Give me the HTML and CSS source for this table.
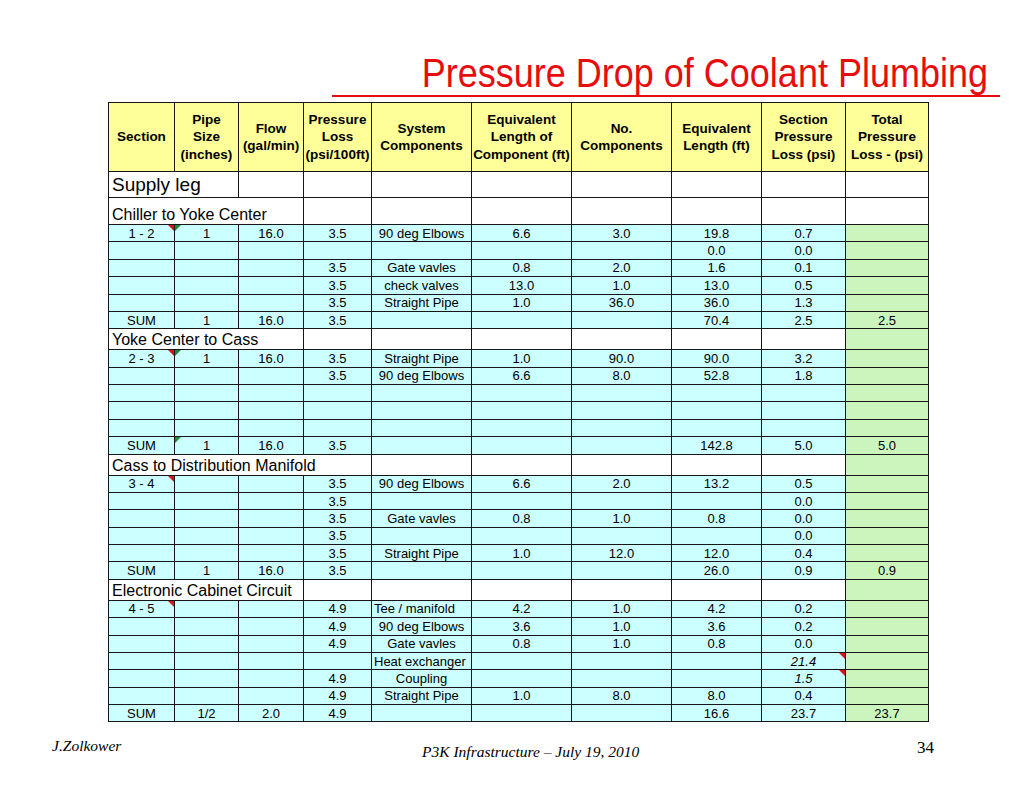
FILE: index.html
```html
<!DOCTYPE html>
<html lang="en">
<head>
<meta charset="utf-8">
<title>Pressure Drop of Coolant Plumbing</title>
<link rel="stylesheet" href="styles.css">
</head>
<body>
<div class="slide">
  <header class="title-block">
    <h1 class="title">Pressure Drop of Coolant Plumbing</h1>
    <div class="rule"></div>
  </header>

  <table class="grid">
    <colgroup>
      <col class="c1"><col class="c2"><col class="c3"><col class="c4"><col class="c5">
      <col class="c6"><col class="c7"><col class="c8"><col class="c9"><col class="c10">
    </colgroup>
    <thead>
      <tr class="head">
        <th>Section</th>
        <th>Pipe<br>Size<br>(inches)</th>
        <th>Flow<br>(gal/min)</th>
        <th>Pressure<br>Loss<br>(psi/100ft)</th>
        <th>System<br>Components</th>
        <th>Equivalent<br>Length of<br>Component (ft)</th>
        <th>No.<br>Components</th>
        <th>Equivalent<br>Length (ft)</th>
        <th>Section<br>Pressure<br>Loss (psi)</th>
        <th>Total<br>Pressure<br>Loss - (psi)</th>
      </tr>
    </thead>
    <tbody>
      <tr class="leg">
        <td colspan="2" class="label big">Supply leg</td>
        <td></td><td></td><td></td><td></td><td></td><td></td><td></td><td></td>
      </tr>
      <tr class="sub tall">
        <td colspan="3" class="label">Chiller to Yoke Center</td>
        <td></td><td></td><td></td><td></td><td></td><td></td><td></td>
      </tr>
      <tr class="row"><td class="cm">1 - 2</td><td class="er">1</td><td>16.0</td><td>3.5</td><td>90 deg Elbows</td><td>6.6</td><td>3.0</td><td>19.8</td><td>0.7</td><td class="tot"></td></tr>
      <tr class="row"><td></td><td></td><td></td><td></td><td></td><td></td><td></td><td>0.0</td><td>0.0</td><td class="tot"></td></tr>
      <tr class="row"><td></td><td></td><td></td><td>3.5</td><td>Gate vavles</td><td>0.8</td><td>2.0</td><td>1.6</td><td>0.1</td><td class="tot"></td></tr>
      <tr class="row"><td></td><td></td><td></td><td>3.5</td><td>check valves</td><td>13.0</td><td>1.0</td><td>13.0</td><td>0.5</td><td class="tot"></td></tr>
      <tr class="row"><td></td><td></td><td></td><td>3.5</td><td>Straight Pipe</td><td>1.0</td><td>36.0</td><td>36.0</td><td>1.3</td><td class="tot"></td></tr>
      <tr class="row"><td>SUM</td><td>1</td><td>16.0</td><td>3.5</td><td></td><td></td><td></td><td>70.4</td><td>2.5</td><td class="tot">2.5</td></tr>

      <tr class="sub">
        <td colspan="3" class="label">Yoke Center to Cass</td>
        <td></td><td></td><td></td><td></td><td></td><td></td><td class="tot"></td>
      </tr>
      <tr class="row"><td class="cm">2 - 3</td><td class="er">1</td><td>16.0</td><td>3.5</td><td>Straight Pipe</td><td>1.0</td><td>90.0</td><td>90.0</td><td>3.2</td><td class="tot"></td></tr>
      <tr class="row"><td></td><td></td><td></td><td>3.5</td><td>90 deg Elbows</td><td>6.6</td><td>8.0</td><td>52.8</td><td>1.8</td><td class="tot"></td></tr>
      <tr class="row"><td></td><td></td><td></td><td></td><td></td><td></td><td></td><td></td><td></td><td class="tot"></td></tr>
      <tr class="row"><td></td><td></td><td></td><td></td><td></td><td></td><td></td><td></td><td></td><td class="tot"></td></tr>
      <tr class="row"><td></td><td></td><td></td><td></td><td></td><td></td><td></td><td></td><td></td><td class="tot"></td></tr>
      <tr class="row"><td>SUM</td><td class="er">1</td><td>16.0</td><td>3.5</td><td></td><td></td><td></td><td>142.8</td><td>5.0</td><td class="tot">5.0</td></tr>

      <tr class="sub">
        <td colspan="4" class="label">Cass to Distribution Manifold</td>
        <td></td><td></td><td></td><td></td><td></td><td class="tot"></td>
      </tr>
      <tr class="row"><td class="cm">3 - 4</td><td></td><td></td><td>3.5</td><td>90 deg Elbows</td><td>6.6</td><td>2.0</td><td>13.2</td><td>0.5</td><td class="tot"></td></tr>
      <tr class="row"><td></td><td></td><td></td><td>3.5</td><td></td><td></td><td></td><td></td><td>0.0</td><td class="tot"></td></tr>
      <tr class="row"><td></td><td></td><td></td><td>3.5</td><td>Gate vavles</td><td>0.8</td><td>1.0</td><td>0.8</td><td>0.0</td><td class="tot"></td></tr>
      <tr class="row"><td></td><td></td><td></td><td>3.5</td><td></td><td></td><td></td><td></td><td>0.0</td><td class="tot"></td></tr>
      <tr class="row"><td></td><td></td><td></td><td>3.5</td><td>Straight Pipe</td><td>1.0</td><td>12.0</td><td>12.0</td><td>0.4</td><td class="tot"></td></tr>
      <tr class="row"><td>SUM</td><td>1</td><td>16.0</td><td>3.5</td><td></td><td></td><td></td><td>26.0</td><td>0.9</td><td class="tot">0.9</td></tr>

      <tr class="sub">
        <td colspan="3" class="label">Electronic Cabinet Circuit</td>
        <td></td><td></td><td></td><td></td><td></td><td></td><td class="tot"></td>
      </tr>
      <tr class="row"><td class="cm">4 - 5</td><td></td><td></td><td>4.9</td><td class="left">Tee / manifold</td><td>4.2</td><td>1.0</td><td>4.2</td><td>0.2</td><td class="tot"></td></tr>
      <tr class="row"><td></td><td></td><td></td><td>4.9</td><td>90 deg Elbows</td><td>3.6</td><td>1.0</td><td>3.6</td><td>0.2</td><td class="tot"></td></tr>
      <tr class="row"><td></td><td></td><td></td><td>4.9</td><td>Gate vavles</td><td>0.8</td><td>1.0</td><td>0.8</td><td>0.0</td><td class="tot"></td></tr>
      <tr class="row"><td></td><td></td><td></td><td></td><td class="left">Heat exchanger</td><td></td><td></td><td></td><td class="cm it">21.4</td><td class="tot"></td></tr>
      <tr class="row"><td></td><td></td><td></td><td>4.9</td><td>Coupling</td><td></td><td></td><td></td><td class="cm it">1.5</td><td class="tot"></td></tr>
      <tr class="row"><td></td><td></td><td></td><td>4.9</td><td>Straight Pipe</td><td>1.0</td><td>8.0</td><td>8.0</td><td>0.4</td><td class="tot"></td></tr>
      <tr class="row"><td>SUM</td><td>1/2</td><td>2.0</td><td>4.9</td><td></td><td></td><td></td><td>16.6</td><td>23.7</td><td class="tot">23.7</td></tr>
    </tbody>
  </table>

  <footer class="footer">
    <span class="author">J.Zolkower</span>
    <span class="event">P3K Infrastructure – July 19, 2010</span>
    <span class="page">34</span>
  </footer>
</div>
</body>
</html>
```

FILE: styles.css
```css
html, body {
  margin: 0;
  padding: 0;
  background: #ffffff;
}

.slide {
  width: 1024px;
  height: 791px;
  box-sizing: border-box;
  padding-top: 55px;
  overflow: hidden;
  font-family: "Liberation Sans", Arial, sans-serif;
  color: #000;
}

/* ---------- title ---------- */
.title-block {
  margin-left: 332px;
  width: 668px;
}

.title {
  margin: 0;
  padding-right: 12px;
  font-weight: normal;
  font-size: 36px;
  line-height: 40px;
  color: #e80c0c;
  text-align: right;
  white-space: nowrap;
  transform: scaleY(1.13);
  transform-origin: 50% 78%;
}

.rule {
  height: 2px;
  background: #e80c0c;
}

/* ---------- table ---------- */
.grid {
  margin: 5px 0 0 108px;
  width: 820px;
  border-collapse: collapse;
  table-layout: fixed;
}

.c1 { width: 66px; }
.c2 { width: 64px; }
.c3 { width: 65px; }
.c4 { width: 68px; }
.c5 { width: 100px; }
.c6 { width: 100px; }
.c7 { width: 100px; }
.c8 { width: 90px; }
.c9 { width: 84px; }
.c10 { width: 83px; }

.grid th,
.grid td {
  border: 1px solid #161616;
  padding: 0;
  text-align: center;
  vertical-align: middle;
  white-space: nowrap;
  overflow: visible;
}

.head th {
  height: 68px;
  background: #ffff99;
  font-size: 13.5px;
  line-height: 17.5px;
  font-weight: bold;
}

.grid td {
  font-size: 13px;
  line-height: 15px;
}

.row td {
  height: 16.38px;
  background: #ccffff;
}

.row td.tot,
.sub td.tot {
  background: #ccf5bd;
}

.leg td {
  height: 25px;
  background: #fff;
}

.sub td {
  height: 20px;
  background: #fff;
}

.sub.tall td {
  height: 26px;
}

.grid td.label {
  text-align: left;
  padding-left: 3px;
  font-size: 16px;
  line-height: 18px;
  vertical-align: bottom;
  padding-bottom: 0;
}

.grid td.label.big {
  font-size: 19px;
  line-height: 22px;
  vertical-align: middle;
}

.grid td.left {
  text-align: left;
  padding-left: 2px;
}

.grid td.it {
  font-style: italic;
}

/* comment / error indicators of the spreadsheet (overlay corners) */
.grid td.cm,
.grid td.er {
  position: relative;
}

.grid td.cm::after {
  content: "";
  position: absolute;
  top: 0;
  right: 0;
  width: 0;
  height: 0;
  border-top: 6px solid #d8141b;
  border-left: 6px solid transparent;
}

.grid td.er::before {
  content: "";
  position: absolute;
  top: 0;
  left: 0;
  width: 0;
  height: 0;
  border-top: 6px solid #1f8a3a;
  border-right: 6px solid transparent;
}

/* ---------- footer ---------- */
.footer {
  display: flex;
  align-items: flex-start;
  margin-top: 15px;
  padding: 0 90px 0 52px;
  font-family: "Liberation Serif", "Times New Roman", serif;
  font-style: italic;
}

.author {
  width: 370px;
  font-size: 15.5px;
  line-height: 18px;
}

.event {
  flex: 1;
  padding-top: 6px;
  font-size: 15.5px;
  line-height: 18px;
}

.page {
  font-style: normal;
  font-size: 17px;
  line-height: 20px;
  padding-top: 1px;
}
```
